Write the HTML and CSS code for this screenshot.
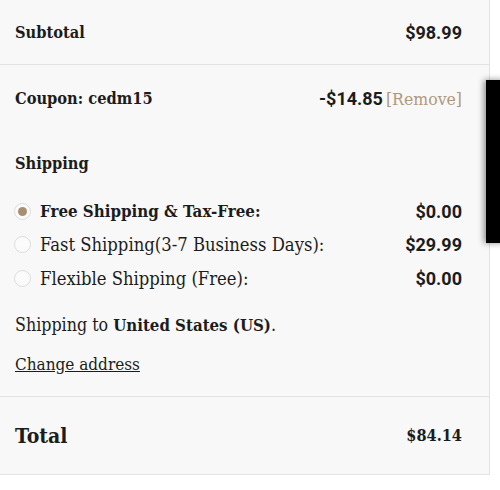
FILE: index.html
```html
<!DOCTYPE html>
<html lang="en">
<head>
<meta charset="utf-8">
<title>Cart totals</title>
<link rel="stylesheet" href="styles.css">
</head>
<body>
<div class="card">
  <div class="row subtotal">
    <span class="label">Subtotal</span>
    <span class="amount">$98.99</span>
  </div>
  <div class="section">
    <div class="row coupon">
      <span class="label">Coupon: cedm15</span>
      <span class="discount"><span class="amount">-$14.85</span> <a class="remove" href="#">[Remove]</a></span>
    </div>
    <div class="ship-title">Shipping</div>
    <ul class="methods">
      <li class="method">
        <span class="choice"><span class="radio checked"></span><span class="mname strong">Free Shipping &amp; Tax-Free:</span></span>
        <span class="amount">$0.00</span>
      </li>
      <li class="method">
        <span class="choice"><span class="radio"></span><span class="mname">Fast Shipping(3-7 Business Days):</span></span>
        <span class="amount">$29.99</span>
      </li>
      <li class="method">
        <span class="choice"><span class="radio"></span><span class="mname">Flexible Shipping (Free):</span></span>
        <span class="amount">$0.00</span>
      </li>
    </ul>
    <p class="dest">Shipping to <strong>United States (US)</strong>.</p>
    <a class="change" href="#">Change address</a>
  </div>
  <div class="row total">
    <span class="label">Total</span>
    <span class="grand">$84.14</span>
  </div>
</div>
<div class="side-tab"></div>
</body>
</html>
```

FILE: styles.css
```css
* { box-sizing: border-box; }
body {
  margin: 0;
  background: #ffffff;
  font-family: "DejaVu Serif Condensed", "DejaVu Serif", serif;
  font-stretch: condensed;
  color: #1c1c1c;
}
.card {
  width: 490px;
  background: #f8f8f8;
  border-right: 1px solid #e2e2e2;
  border-bottom: 1px solid #e2e2e2;
}
.row {
  display: flex;
  justify-content: space-between;
  align-items: center;
  padding: 0 27px 0 15px;
}
.label {
  font-size: 16.3px;
  font-weight: bold;
}
.amount {
  font-family: Roboto, "Liberation Sans", sans-serif;
  font-stretch: normal;
  font-weight: bold;
  font-size: 18px;
}
.subtotal {
  height: 65px;
  border-bottom: 1px solid #e2e2e2;
}
.section {
  padding: 23px 27px 22px 15px;
  border-bottom: 1px solid #e2e2e2;
}
.section .row { padding: 0; }
.coupon { height: 20px; }
.discount { display: flex; align-items: baseline; gap: 3px; }
.remove {
  color: #b0997b;
  text-decoration: none;
  font-size: 17.5px;
}
.ship-title {
  margin-top: 46px;
  height: 20px;
  line-height: 20px;
  font-size: 16.3px;
  font-weight: bold;
}
.methods {
  list-style: none;
  margin: 20.5px 0 0;
  padding: 0;
}
.method {
  height: 33.5px;
  display: flex;
  justify-content: space-between;
  align-items: center;
}
.choice { display: flex; align-items: center; }
.radio {
  width: 17px;
  height: 17px;
  border-radius: 50%;
  border: 1px solid #dcdcdc;
  background: #fbfbfb;
  margin-left: -1px;
  margin-right: 9px;
  display: flex;
  align-items: center;
  justify-content: center;
}
.radio.checked::after {
  content: "";
  width: 9px;
  height: 9px;
  border-radius: 50%;
  background: #a98f71;
}
.mname { font-size: 18.3px; }
.mname.strong { font-weight: bold; font-size: 16.8px; }
.dest {
  margin: 20px 0 0;
  height: 20px;
  line-height: 20px;
  font-size: 17.7px;
}
.dest strong { font-size: 16.7px; }
.change {
  display: block;
  margin-top: 19px;
  height: 20px;
  line-height: 20px;
  font-size: 17px;
  color: #1c1c1c;
  width: max-content;
}
.total { height: 77px; }
.total .label { font-size: 21px; }
.grand { font-size: 16.2px; font-weight: bold; }
.side-tab {
  position: fixed;
  left: 486px;
  top: 80px;
  width: 20px;
  height: 163px;
  background: #000;
  box-shadow: -2px 0 6px rgba(0,0,0,0.45);
}
```
